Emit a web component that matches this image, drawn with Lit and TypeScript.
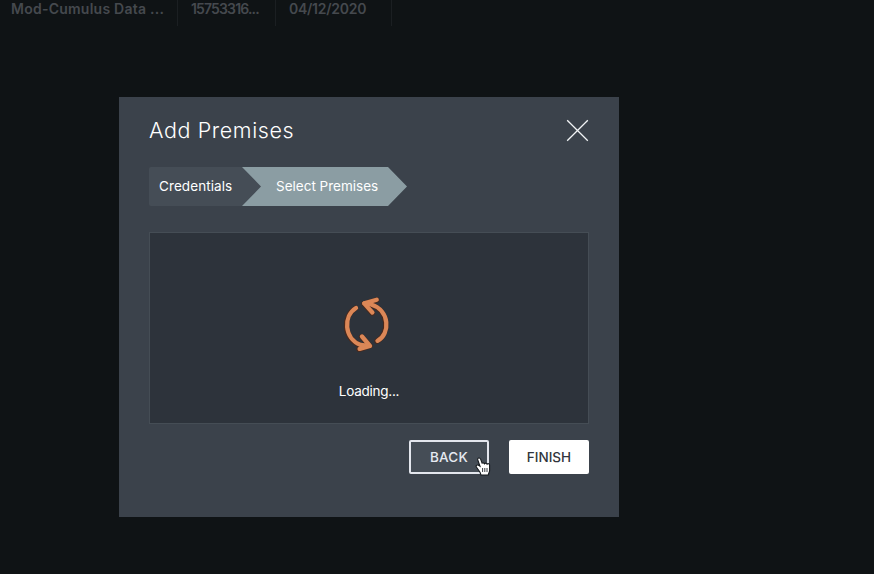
import { LitElement, html, css } from "lit";
import { customElement } from "lit/decorators.js";

@customElement("app-root")
export class AppRoot extends LitElement {
  static styles = css`
    * { box-sizing: border-box; }
    :host {
      display: block; position: relative; width: 100%; height: 574px; overflow: hidden;
      background: #0f1315; font-family: Inter, "Noto Sans", sans-serif; color: #fff;
    }
    .row { display: flex; height: 26px; color: #45494e; font-size: 14px; font-weight: 600; line-height: 18px; }
    .cell { border-right: 1px solid #1b1f22; padding-left: 13px; white-space: nowrap; }
    .name { width: 178px; padding-left: 11px; letter-spacing: 0.24px; }
    .number { width: 98px; letter-spacing: -0.85px; }
    .date { width: 116px; letter-spacing: -0.25px; }
    .modal {
      width: 500px; height: 420px; margin: 71px 0 0 119px; padding: 18px 30px 0;
      background: #3b424b; display: flex; flex-direction: column;
    }
    .head { display: flex; justify-content: space-between; align-items: center; height: 30px; }
    h1 { margin: 0; font-size: 21.5px; font-weight: 300; line-height: 30px; letter-spacing: 0.6px; white-space: nowrap; }
    .close { display: block; width: 23px; height: 23px; }
    .steps { display: flex; height: 39px; margin-top: 22px; font-size: 13.5px; line-height: 39px; white-space: nowrap; }
    .step { width: 112px; padding-left: 10px; background: #454d56; border-radius: 2px 0 0 2px; letter-spacing: 0.08px; }
    .current {
      width: 165px; margin-left: -19px; padding-left: 34px; background: #8b9da3; border-radius: 0; letter-spacing: 0;
      clip-path: polygon(0 0, 146px 0, 100% 50%, 146px 100%, 0 100%, 19px 50%);
    }
    .panel {
      height: 192px; margin-top: 26px; width: 440px; border: 1px solid #454d55; background: #2d333b;
      display: flex; flex-direction: column; align-items: center; padding-top: 62px;
    }
    .spinner { display: block; width: 50px; height: 60px; margin-left: -6px; }
    .loading { margin-top: 26px; font-size: 13.5px; line-height: 20px; letter-spacing: -0.25px; }
    .actions { display: flex; justify-content: flex-end; gap: 20px; margin-top: 16px; }
    button {
      width: 80px; height: 34px; padding: 0; border: 2px solid #fff; border-radius: 2px; background: #fff;
      color: #30353c; font: 500 13.5px/30px Inter, "Noto Sans", sans-serif; white-space: nowrap;
    }
    .back { background: #454d56; color: #e6eaf1; border-color: #e3e6ed; letter-spacing: 0.2px; }
    .pointer { position: absolute; left: 475px; top: 457px; width: 16px; height: 19px; }
  `;

  render() {
    return html`
      <div class="row">
        <div class="cell name">Mod-Cumulus Data ...</div>
        <div class="cell number">15753316...</div>
        <div class="cell date">04/12/2020</div>
      </div>
      <section class="modal">
        <div class="head">
          <h1>Add Premises</h1>
          <svg class="close" viewBox="0 0 23 23" fill="none" stroke="#f2f4f6" stroke-width="1.3">
            <path d="M1.2 1.2L21.8 21.8M21.8 1.2L1.2 21.8" />
          </svg>
        </div>
        <div class="steps">
          <div class="step">Credentials</div>
          <div class="step current">Select Premises</div>
        </div>
        <div class="panel">
          <svg class="spinner" viewBox="341 295 50 60" fill="none" stroke-linecap="round" stroke-linejoin="round">
            <g stroke="#49291c" stroke-width="5.4">
              <path d="M355.5 308.3C342.5 316 343 338.5 360 345" />
              <path d="M361.7 336.8L370 346L359 349.3" />
              <path d="M377 341.2C390 334 389.5 310 370.3 304.5" />
              <path d="M376.7 300L364 303.8L372.2 313" />
            </g>
            <g stroke="#db8757" stroke-width="4.3">
              <path d="M356 308C343.2 316 343.7 338.5 360.7 345L369 345.8" />
              <path d="M362 336.5L370 346L359.6 348.9" />
              <path d="M377.5 340.8C390.5 334 390 310 371 304.5L364.5 303.4" />
              <path d="M376.7 299.7L364.2 303.4L372.4 312.5" />
            </g>
          </svg>
          <div class="loading">Loading...</div>
        </div>
        <div class="actions">
          <button class="back">BACK</button>
          <button>FINISH</button>
        </div>
      </section>
      <svg class="pointer" viewBox="0 0 16 19">
        <path d="M4.2 1C2.9.8 2.4 1.8 2.8 3L5 9.2L3.5 8.3C2 7.5.4 8.6 1.4 10L5 15.2L6 18H13.2L14.6 13.8V8C14.4 6.5 12.8 6.3 12.1 7.2C11.6 5.9 10.1 5.9 9.5 6.8C8.9 5.6 7.7 5.7 7.1 6.2L5.6 2.1C5.3 1.4 4.9 1.1 4.2 1Z" fill="#fff" stroke="#15191d" stroke-width="1.1" />
        <path d="M7.6 11V15M9.8 11V15M12 11V15" stroke="#22272c" stroke-width=".9" />
      </svg>
    `;
  }
}
